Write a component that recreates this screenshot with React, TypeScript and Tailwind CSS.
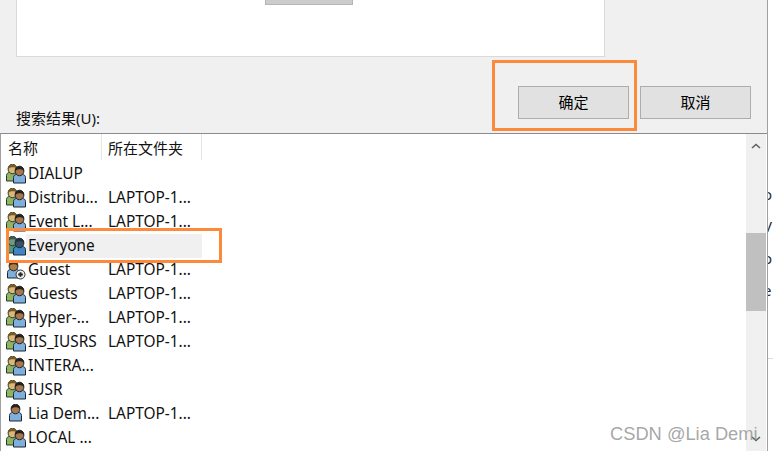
const rows = [
  { name: 'DIALUP', folder: '', icon: 'group' },
  { name: 'Distribu...', folder: 'LAPTOP-1...', icon: 'group' },
  { name: 'Event L...', folder: 'LAPTOP-1...', icon: 'group' },
  { name: 'Everyone', folder: '', icon: 'group', selected: true },
  { name: 'Guest', folder: 'LAPTOP-1...', icon: 'guest' },
  { name: 'Guests', folder: 'LAPTOP-1...', icon: 'group' },
  { name: 'Hyper-...', folder: 'LAPTOP-1...', icon: 'group' },
  { name: 'IIS_IUSRS', folder: 'LAPTOP-1...', icon: 'group' },
  { name: 'INTERA...', folder: '', icon: 'group' },
  { name: 'IUSR', folder: '', icon: 'group' },
  { name: 'Lia Dem...', folder: 'LAPTOP-1...', icon: 'user' },
  { name: 'LOCAL ...', folder: '', icon: 'group' },
];

function Person({ x, y, face, hair, body, edge }: { x: number; y: number; face: string; hair: string; body: string; edge: string }) {
  return (
    <g transform={`translate(${x} ${y})`}>
      <path d="M0.5 17V11.5C0.5 9.5 2 8.5 3.5 8.5H9.5C11 8.5 12.5 9.5 12.5 11.5V17Z" fill={body} stroke={edge} />
      <ellipse cx="6.5" cy="5" rx="4.4" ry="4.8" fill={face} stroke={edge} />
      <path d="M2.2 5.2C1.8 1.6 4 0.4 6.5 0.4C9 0.4 11.2 1.6 10.8 5.2C9.6 3.4 8 3 5.8 3.2C4.2 3.4 3 4 2.2 5.2Z" fill={hair} />
    </g>
  );
}

function RowIcon({ kind, dim }: { kind: string; dim?: boolean }) {
  if (kind === 'user') {
    return (
      <svg width="20" height="20" viewBox="0 0 20 20" className="shrink-0">
        <Person x={3} y={0} face="#a8774a" hair="#26221e" body="#7fafdc" edge="#1e2630" />
      </svg>
    );
  }
  if (kind === 'guest') {
    return (
      <svg width="20" height="20" viewBox="0 0 20 20" className="shrink-0">
        <Person x={1} y={1} face="#b07c48" hair="#4a3018" body="#7fafdc" edge="#1e2630" />
        <circle cx="14.5" cy="14.5" r="4.5" fill="#ececec" stroke="#333" />
        <path d="M12.2 14.5H16.8M14.5 12.2V16.8" stroke="#222" strokeWidth="1.8" />
      </svg>
    );
  }
  return (
    <svg width="20" height="20" viewBox="0 0 20 20" className="shrink-0">
      <Person
        x={0}
        y={0}
        face={dim ? '#6f9a88' : '#dcb676'}
        hair={dim ? '#3d5a50' : '#7a5a2a'}
        body={dim ? '#4f9a78' : '#8db566'}
        edge="#2c3826"
      />
      <Person
        x={7}
        y={2}
        face={dim ? '#3a5064' : '#a8764a'}
        hair={dim ? '#20303c' : '#26201a'}
        body={dim ? '#3f86c4' : '#7fafdc'}
        edge="#1a2632"
      />
    </svg>
  );
}

function Chevron({ up }: { up?: boolean }) {
  return (
    <svg width="10" height="6" viewBox="0 0 10 6" className="shrink-0">
      <path d={up ? 'M1 5L5 1.5L9 5' : 'M1 1L5 4.5L9 1'} fill="none" stroke="#606060" strokeWidth="1.6" />
    </svg>
  );
}

function DialogButton({ label }: { label: string }) {
  return (
    <button className="w-[111px] h-[33px] bg-[#e1e1e1] border border-[#adadad] text-[15px] leading-none text-black">
      {label}
    </button>
  );
}

export default function App() {
  return (
    <div
      className="relative flex w-[773px] h-[451px] overflow-hidden bg-white"
      style={{ fontFamily: '"Noto Sans", "Noto Sans CJK SC", sans-serif' }}
    >
      <div className="relative z-10 flex flex-col shrink-0 w-[768px] h-full bg-[#f0f0f0] border-r border-[#a0a0a0]">
        {/* top results box, cut off by the screenshot */}
        <div className="ml-4 w-[589px] h-[57px] shrink-0 bg-white border-x border-b border-[#d9d9d9]">
          <div className="ml-[248px] w-[88px] h-[5px] bg-[#cccccc] border-x border-b border-[#b5b5b5]" />
        </div>

        <div className="flex justify-end gap-[11px] mt-[29px] pr-4 shrink-0">
          <DialogButton label="确定" />
          <DialogButton label="取消" />
        </div>

        <div className="ml-4 h-[14px] shrink-0 text-[15px] text-[#111]">
          <span className="block h-0 leading-[0px] -translate-y-px">搜索结果(U):</span>
        </div>

        {/* list view */}
        <div className="flex flex-1 min-h-0 bg-white border-t border-l border-t-[#8b8b8f] border-l-[#a0a0a0]">
          <div className="flex-1 min-w-0">
            <div className="flex h-[26px] text-[15px] text-[#111]">
              <div className="w-[101px] pl-[7px] border-r border-[#e5e5e5] leading-[29px]">名称</div>
              <div className="w-[100px] pl-[6px] border-r border-[#e5e5e5] leading-[29px]">所在文件夹</div>
            </div>
            <div className="pt-[2px]">
              {rows.map((row) => (
                <div key={row.name} className="flex items-center h-6 pl-[5px] text-[15.4px] text-[#111]">
                  <RowIcon kind={row.icon} dim={row.selected} />
                  <div className={`flex items-center w-[176px] h-6 pl-[2px] ${row.selected ? 'bg-[#f0f0f0]' : ''}`}>
                    <span className="w-[80px] whitespace-nowrap">{row.name}</span>
                    <span className="whitespace-nowrap">{row.folder}</span>
                  </div>
                </div>
              ))}
            </div>
          </div>

          {/* scrollbar */}
          <div className="flex flex-col items-center w-[20px] mr-px bg-[#f0f0f0]">
            <div className="flex items-center justify-center h-[24px] shrink-0">
              <Chevron up />
            </div>
            <div className="w-full h-[78px] mt-[75px] bg-[#c0c0c0]" />
            <div className="flex-1" />
            <div className="flex items-center justify-center h-[24px] shrink-0">
              <Chevron />
            </div>
          </div>
        </div>
      </div>

      {/* text of the window behind, cut off at the dialog edge */}
      <div className="flex flex-col shrink-0 gap-[11px] pt-[184px] -ml-[5px] text-[15px] leading-[21px] text-[#1c2a44]">
        <span>o</span>
        <span>V</span>
        <span>o</span>
        <span>e</span>
        <div className="mt-[46px] w-[12px] h-px bg-[#dddddd]" />
      </div>

      {/* annotation boxes */}
      <div className="absolute z-20 left-[492px] top-[60px] w-[145px] h-[71px] border-[3px] border-[#fb8a3c]" />
      <div className="absolute z-20 left-[6px] top-[228px] w-[216px] h-[35px] border-[3px] border-[#fb8a3c]" />

      {/* watermark */}
      <div
        className="absolute z-20 left-[610px] top-[422px] text-[18.3px] leading-[24px] text-[#8f8f8f]/80 whitespace-nowrap"
        style={{ fontFamily: '"Liberation Sans", sans-serif' }}
      >
        CSDN @Lia Demi
      </div>
    </div>
  );
}
